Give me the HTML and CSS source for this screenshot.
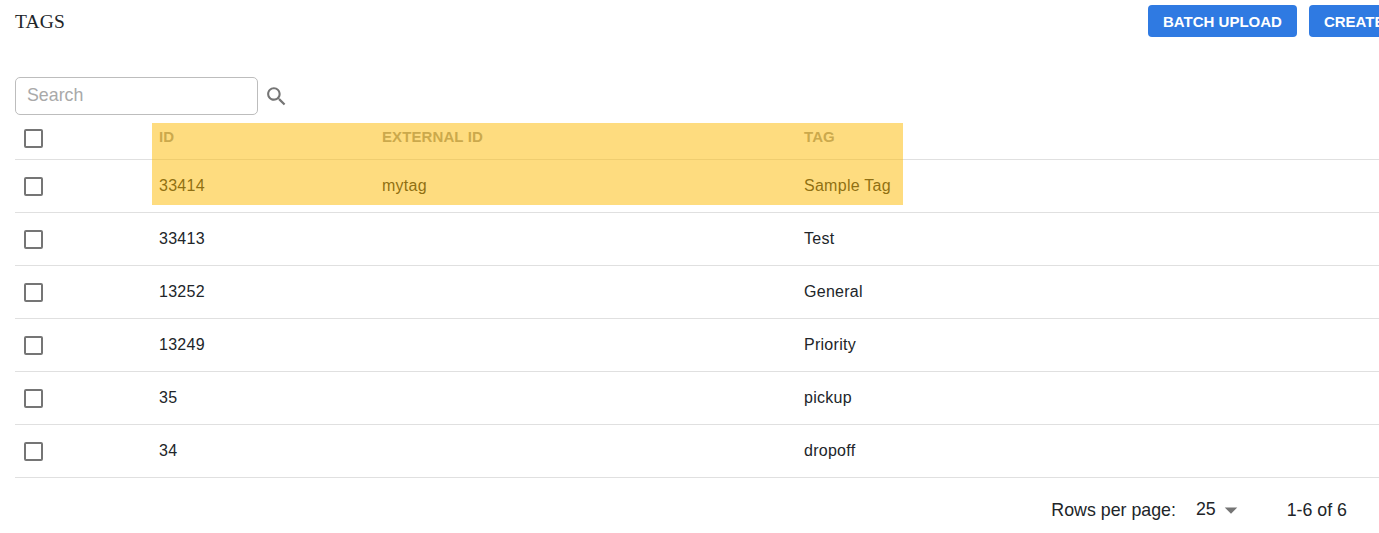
FILE: index.html
```html
<!DOCTYPE html>
<html lang="en">
<head>
    <meta charset="UTF-8">
    <meta name="viewport" content="width=device-width, initial-scale=1.0">
    <title>Tags</title>
    <link rel="stylesheet" href="styles.css">
</head>
<body>
    <div class="page">
        <div class="header">
            <h1 class="title">TAGS</h1>
            <div class="actions">
                <button class="btn">BATCH UPLOAD</button>
                <button class="btn">CREATE</button>
            </div>
        </div>
        <div class="search">
            <input type="text" class="search-input" placeholder="Search">
            <svg class="search-icon" viewBox="0 0 24 24"><path d="M15.5 14h-.79l-.28-.27C15.41 12.59 16 11.11 16 9.5 16 5.91 13.09 3 9.5 3S3 5.91 3 9.5 5.91 16 9.5 16c1.61 0 3.09-.59 4.23-1.57l.27.28v.79l5 4.99L20.49 19l-4.99-5zm-6 0C7.01 14 5 11.99 5 9.5S7.01 5 9.5 5 14 7.01 14 9.5 11.99 14 9.5 14z"/></svg>
        </div>
        <div class="table-wrap">
            <table class="table">
                <colgroup>
                    <col class="col-check">
                    <col class="col-id">
                    <col class="col-external">
                    <col>
                </colgroup>
                <thead>
                    <tr>
                        <th><span class="checkbox"></span></th>
                        <th>ID</th>
                        <th>EXTERNAL ID</th>
                        <th>TAG</th>
                    </tr>
                </thead>
                <tbody>
                    <tr><td><span class="checkbox"></span></td><td>33414</td><td>mytag</td><td>Sample Tag</td></tr>
                    <tr><td><span class="checkbox"></span></td><td>33413</td><td></td><td>Test</td></tr>
                    <tr><td><span class="checkbox"></span></td><td>13252</td><td></td><td>General</td></tr>
                    <tr><td><span class="checkbox"></span></td><td>13249</td><td></td><td>Priority</td></tr>
                    <tr><td><span class="checkbox"></span></td><td>35</td><td></td><td>pickup</td></tr>
                    <tr><td><span class="checkbox"></span></td><td>34</td><td></td><td>dropoff</td></tr>
                </tbody>
            </table>
            <div class="highlight"></div>
        </div>
        <div class="pagination">
            <span>Rows per page:</span>
            <span class="rows-select">25 <svg class="arrow" viewBox="0 0 24 24"><path d="M7 10l5 5 5-5z"/></svg></span>
            <span class="range">1-6 of 6</span>
        </div>
    </div>
</body>
</html>
```

FILE: styles.css
```css
* {
    box-sizing: border-box;
}
body {
    margin: 0;
    overflow: hidden;
    background: #fff;
    color: #212529;
    font-family: "Liberation Sans", Arial, sans-serif;
}
.page {
    padding: 5px 0 0 15px;
}
.header {
    display: flex;
    justify-content: space-between;
    height: 72px;
}
.title {
    margin: 0;
    font-family: "Liberation Serif", "Times New Roman", serif;
    font-size: 19.5px;
    font-weight: normal;
    line-height: 34px;
    letter-spacing: 0.2px;
}
.actions {
    display: flex;
    gap: 12px;
    width: 231px;
}
.btn {
    flex: none;
    height: 32px;
    padding: 0 15px;
    border: none;
    border-radius: 4px;
    background: #2f7ae2;
    color: #fff;
    font-family: inherit;
    font-size: 15px;
    font-weight: bold;
    cursor: pointer;
}
.search {
    display: flex;
    align-items: center;
    gap: 6px;
}
.search-input {
    width: 243px;
    height: 38px;
    padding: 0 11px 2px;
    border: 1px solid #bdbdbd;
    border-radius: 5px;
    font-family: inherit;
    font-size: 17.8px;
}
.search-input::placeholder {
    color: #a9a9a9;
}
.search-icon {
    width: 25px;
    height: 25px;
    fill: #757575;
}
.table-wrap {
    position: relative;
}
.table {
    width: 100%;
    table-layout: fixed;
    border-collapse: separate;
    border-spacing: 0;
}
.col-check {
    width: 144px;
}
.col-id {
    width: 223px;
}
.col-external {
    width: 422px;
}
.table th,
.table td {
    height: 53px;
    padding: 0;
    border-bottom: 1px solid #e0e0e0;
    text-align: left;
    font-size: 16px;
    letter-spacing: 0.27px;
}
.table th {
    height: 45px;
    padding-bottom: 2px;
    color: #999;
    font-size: 15px;
    letter-spacing: 0.1px;
}
.checkbox {
    display: block;
    width: 19px;
    height: 19px;
    margin: 1px 0 0 9px;
    border: 2px solid #757575;
    border-radius: 2px;
}
.table th .checkbox {
    margin-top: 5px;
}
.highlight {
    position: absolute;
    top: 8px;
    left: 137px;
    width: 751px;
    height: 82px;
    background: rgba(253, 185, 0, 0.5);
}
.pagination {
    display: flex;
    justify-content: flex-end;
    align-items: center;
    height: 64px;
    padding-right: 32px;
    font-size: 17.8px;
}
.rows-select {
    display: flex;
    align-items: center;
    margin-left: 20px;
    padding-bottom: 2px;
}
.arrow {
    width: 30px;
    height: 30px;
    margin-top: 2px;
    fill: #757575;
}
.range {
    margin-left: 41px;
}
```
